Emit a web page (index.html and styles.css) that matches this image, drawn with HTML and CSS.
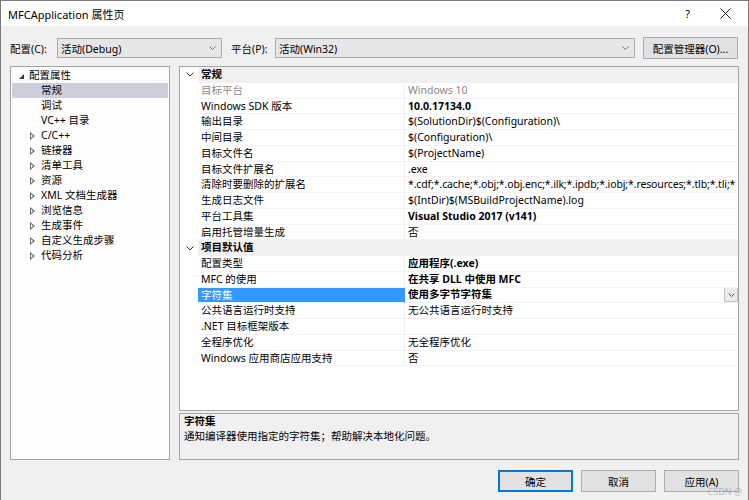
FILE: index.html
```html
<!DOCTYPE html>
<html lang="zh-CN">
<head>
<meta charset="utf-8">
<title>MFCApplication 属性页</title>
<link rel="stylesheet" href="styles.css">
</head>
<body>
<div class="window">
  <div class="titlebar">
    <span class="title">MFCApplication 属性页</span>
    <span class="help">?</span>
    <svg class="close" width="11" height="11" viewBox="0 0 11 11"><path d="M0.5 0.5 L10.5 10.5 M10.5 0.5 L0.5 10.5" stroke="#222" stroke-width="1" fill="none"/></svg>
  </div>

  <div class="toolbar">
    <span class="label l1">配置(C):</span>
    <div class="combo c1"><span class="ctext">活动(Debug)</span><svg class="chev" width="7" height="4" viewBox="0 0 7 4"><path d="M0.5 0.5 L3.5 3.5 L6.5 0.5" stroke="#777" fill="none"/></svg></div>
    <span class="label l2">平台(P):</span>
    <div class="combo c2"><span class="ctext">活动(Win32)</span><svg class="chev" width="7" height="4" viewBox="0 0 7 4"><path d="M0.5 0.5 L3.5 3.5 L6.5 0.5" stroke="#777" fill="none"/></svg></div>
    <button class="btn cfgmgr">配置管理器(O)...</button>
  </div>

  <div class="main">
    <div class="tree">
      <div class="titem root"><span class="tri-exp"></span><span>配置属性</span></div>
      <div class="titem child sel"><span>常规</span></div>
      <div class="titem child"><span>调试</span></div>
      <div class="titem child"><span>VC++ 目录</span></div>
      <div class="titem coll"><span class="tri-col"></span><span>C/C++</span></div>
      <div class="titem coll"><span class="tri-col"></span><span>链接器</span></div>
      <div class="titem coll"><span class="tri-col"></span><span>清单工具</span></div>
      <div class="titem coll"><span class="tri-col"></span><span>资源</span></div>
      <div class="titem coll"><span class="tri-col"></span><span>XML 文档生成器</span></div>
      <div class="titem coll"><span class="tri-col"></span><span>浏览信息</span></div>
      <div class="titem coll"><span class="tri-col"></span><span>生成事件</span></div>
      <div class="titem coll"><span class="tri-col"></span><span>自定义生成步骤</span></div>
      <div class="titem coll"><span class="tri-col"></span><span>代码分析</span></div>
    </div>

    <div class="right">
      <div class="grid">
        <div class="cat"><span class="gut"><svg width="8" height="5" viewBox="0 0 8 5"><path d="M0.5 0.5 L4 4 L7.5 0.5" stroke="#333" fill="none"/></svg></span><span class="catname">常规</span></div>
        <div class="row"><span class="gut"></span><span class="name ro">目标平台</span><span class="val ro">Windows 10</span></div>
        <div class="row"><span class="gut"></span><span class="name">Windows SDK 版本</span><span class="val b">10.0.17134.0</span></div>
        <div class="row"><span class="gut"></span><span class="name">输出目录</span><span class="val">$(SolutionDir)$(Configuration)\</span></div>
        <div class="row"><span class="gut"></span><span class="name">中间目录</span><span class="val">$(Configuration)\</span></div>
        <div class="row"><span class="gut"></span><span class="name">目标文件名</span><span class="val">$(ProjectName)</span></div>
        <div class="row"><span class="gut"></span><span class="name">目标文件扩展名</span><span class="val">.exe</span></div>
        <div class="row"><span class="gut"></span><span class="name">清除时要删除的扩展名</span><span class="val tight">*.cdf;*.cache;*.obj;*.obj.enc;*.ilk;*.ipdb;*.iobj;*.resources;*.tlb;*.tli;*</span></div>
        <div class="row"><span class="gut"></span><span class="name">生成日志文件</span><span class="val">$(IntDir)$(MSBuildProjectName).log</span></div>
        <div class="row"><span class="gut"></span><span class="name">平台工具集</span><span class="val b">Visual Studio 2017 (v141)</span></div>
        <div class="row"><span class="gut"></span><span class="name">启用托管增量生成</span><span class="val">否</span></div>
        <div class="cat"><span class="gut"><svg width="8" height="5" viewBox="0 0 8 5"><path d="M0.5 0.5 L4 4 L7.5 0.5" stroke="#333" fill="none"/></svg></span><span class="catname">项目默认值</span></div>
        <div class="row"><span class="gut"></span><span class="name">配置类型</span><span class="val b">应用程序(.exe)</span></div>
        <div class="row"><span class="gut"></span><span class="name">MFC 的使用</span><span class="val b">在共享 DLL 中使用 MFC</span></div>
        <div class="row selrow"><span class="gut"></span><span class="name">字符集</span><span class="val b"><span class="vtext">使用多字节字符集</span><span class="ddbtn"><svg width="7" height="4" viewBox="0 0 7 4"><path d="M0.5 0.5 L3.5 3.5 L6.5 0.5" stroke="#555" fill="none"/></svg></span></span></div>
        <div class="row"><span class="gut"></span><span class="name">公共语言运行时支持</span><span class="val">无公共语言运行时支持</span></div>
        <div class="row"><span class="gut"></span><span class="name">.NET 目标框架版本</span><span class="val"></span></div>
        <div class="row"><span class="gut"></span><span class="name">全程序优化</span><span class="val">无全程序优化</span></div>
        <div class="row"><span class="gut"></span><span class="name">Windows 应用商店应用支持</span><span class="val">否</span></div>
      </div>
      <div class="desc">
        <div class="dtitle">字符集</div>
        <div class="dtext">通知编译器使用指定的字符集；帮助解决本地化问题。</div>
      </div>
    </div>
  </div>

  <div class="buttons">
    <button class="btn dlg default">确定</button>
    <button class="btn dlg">取消</button>
    <button class="btn dlg">应用(A)</button>
  </div>
  <span class="watermark">CSDN @</span>
</div>
</body>
</html>
```

FILE: styles.css
```css
html, body {
  margin: 0;
  padding: 0;
  background: #f0f0f0;
}

body {
  font-family: "Noto Sans", "Noto Sans CJK SC", sans-serif;
  font-size: 10.5px;
  color: #000;
}

.window {
  position: relative;
  width: 749px;
  height: 500px;
  box-sizing: border-box;
  border: 1px solid #7a7a7a;
  border-bottom: none;
  background: #f0f0f0;
  display: flex;
  flex-direction: column;
  overflow: hidden;
}

/* Title bar */
.titlebar {
  height: 25px;
  flex: none;
  background: #fff;
  display: flex;
  align-items: center;
  padding-left: 7px;
}
.title {
  font-size: 11px;
  flex: 1;
}
.help {
  font-size: 11px;
  margin-right: 30px;
}
.close {
  margin-right: 17px;
}

/* Toolbar */
.toolbar {
  flex: none;
  display: flex;
  align-items: center;
  height: 22px;
  margin-top: 11px;
  padding-left: 9px;
}
.label {
  flex: none;
}
.l1 { width: 47px; }
.l2 { width: 44px; margin-left: 9px; }
.combo {
  flex: none;
  box-sizing: border-box;
  height: 20px;
  border: 1px solid #acacac;
  background: #e6e6e6;
  display: flex;
  align-items: center;
  padding-left: 3px;
}
.c1 { width: 165px; }
.c2 { width: 360px; }
.ctext { flex: 1; }
.chev { margin-right: 5px; }

.btn {
  font-family: inherit;
  font-size: 10.5px;
  color: #000;
  background: #e1e1e1;
  border: 1px solid #adadad;
  box-sizing: border-box;
  padding: 0;
  height: 22px;
}
.cfgmgr {
  width: 95px;
  margin-left: 8px;
}

/* Main */
.main {
  flex: none;
  display: flex;
  gap: 9px;
  margin-top: 7px;
  padding-left: 9px;
  height: 394px;
}

.tree {
  width: 160px;
  box-sizing: border-box;
  border: 1px solid #a5a5a5;
  background: #fdfdfd;
  padding-top: 1px;
}
.titem {
  height: 15px;
  line-height: 15px;
  display: flex;
  align-items: center;
  margin: 0 1px;
  white-space: nowrap;
}
.titem.root { padding-left: 7px; }
.titem.child { padding-left: 29px; }
.titem.coll { padding-left: 18px; }
.titem.sel { background: #cdd0dc; }
.tri-exp {
  width: 0;
  height: 0;
  border-left: 5px solid transparent;
  border-bottom: 5px solid #3a3a3a;
  margin-right: 5px;
  margin-top: 1px;
}
.tri-col {
  width: 0;
  height: 0;
  border-top: 4px solid transparent;
  border-bottom: 4px solid transparent;
  border-left: 5px solid #6a6a6a;
  position: relative;
  margin-right: 6px;
}
.tri-col::after {
  content: "";
  position: absolute;
  left: -4px;
  top: -2px;
  border-top: 2px solid transparent;
  border-bottom: 2px solid transparent;
  border-left: 2.5px solid #fdfdfd;
}

.right {
  width: 560px;
  display: flex;
  flex-direction: column;
  gap: 2px;
}

.grid {
  height: 345px;
  box-sizing: border-box;
  border: 1px solid #a5a5a5;
  background: #fff;
  overflow: hidden;
}
.cat, .row {
  display: grid;
  grid-template-columns: 18px 207px 333px;
  height: 15.75px;
  line-height: 15.75px;
  white-space: nowrap;
}
.gut {
  display: flex;
  align-items: center;
  justify-content: center;
  padding-left: 1px;
}
.catname {
  grid-column: 2 / 4;
  background: #f0f0f3;
  font-weight: bold;
  padding-left: 3px;
}
.name {
  padding-left: 3px;
  box-sizing: border-box;
  border-right: 1px solid #f0f0f0;
  border-bottom: 1px solid #f4f4f4;
  overflow: hidden;
}
.val {
  padding-left: 3px;
  box-sizing: border-box;
  border-bottom: 1px solid #f4f4f4;
  overflow: hidden;
}
.val.tight {
  letter-spacing: -0.12px;
}
.ro { color: #8a8a8a; }
.b { font-weight: bold; }

.selrow .name {
  background: #3399ff;
  color: #fff;
  border-right-color: #3399ff;
}
.selrow .val {
  display: flex;
  align-items: center;
}
.vtext { flex: 1; }
.ddbtn {
  flex: none;
  width: 14px;
  height: 15px;
  box-sizing: border-box;
  border: 1px solid #c4c4c4;
  background: #ececec;
  display: flex;
  align-items: center;
  justify-content: center;
}

.desc {
  height: 47px;
  box-sizing: border-box;
  border: 1px solid #a5a5a5;
  background: #f0f0f0;
  padding-left: 4px;
  line-height: 15px;
  padding-top: 0;
}
.dtitle { font-weight: bold; }

/* Buttons */
.buttons {
  flex: none;
  display: flex;
  justify-content: flex-end;
  gap: 8px;
  margin-top: 10px;
  padding-right: 9px;
}
.dlg { width: 75px; }
.default {
  border-color: #0078d7;
  box-shadow: inset 0 0 0 1px #0078d7;
}

.watermark {
  position: absolute;
  right: 6px;
  bottom: 2px;
  font-size: 9px;
  color: rgba(120, 120, 120, 0.45);
}
```
